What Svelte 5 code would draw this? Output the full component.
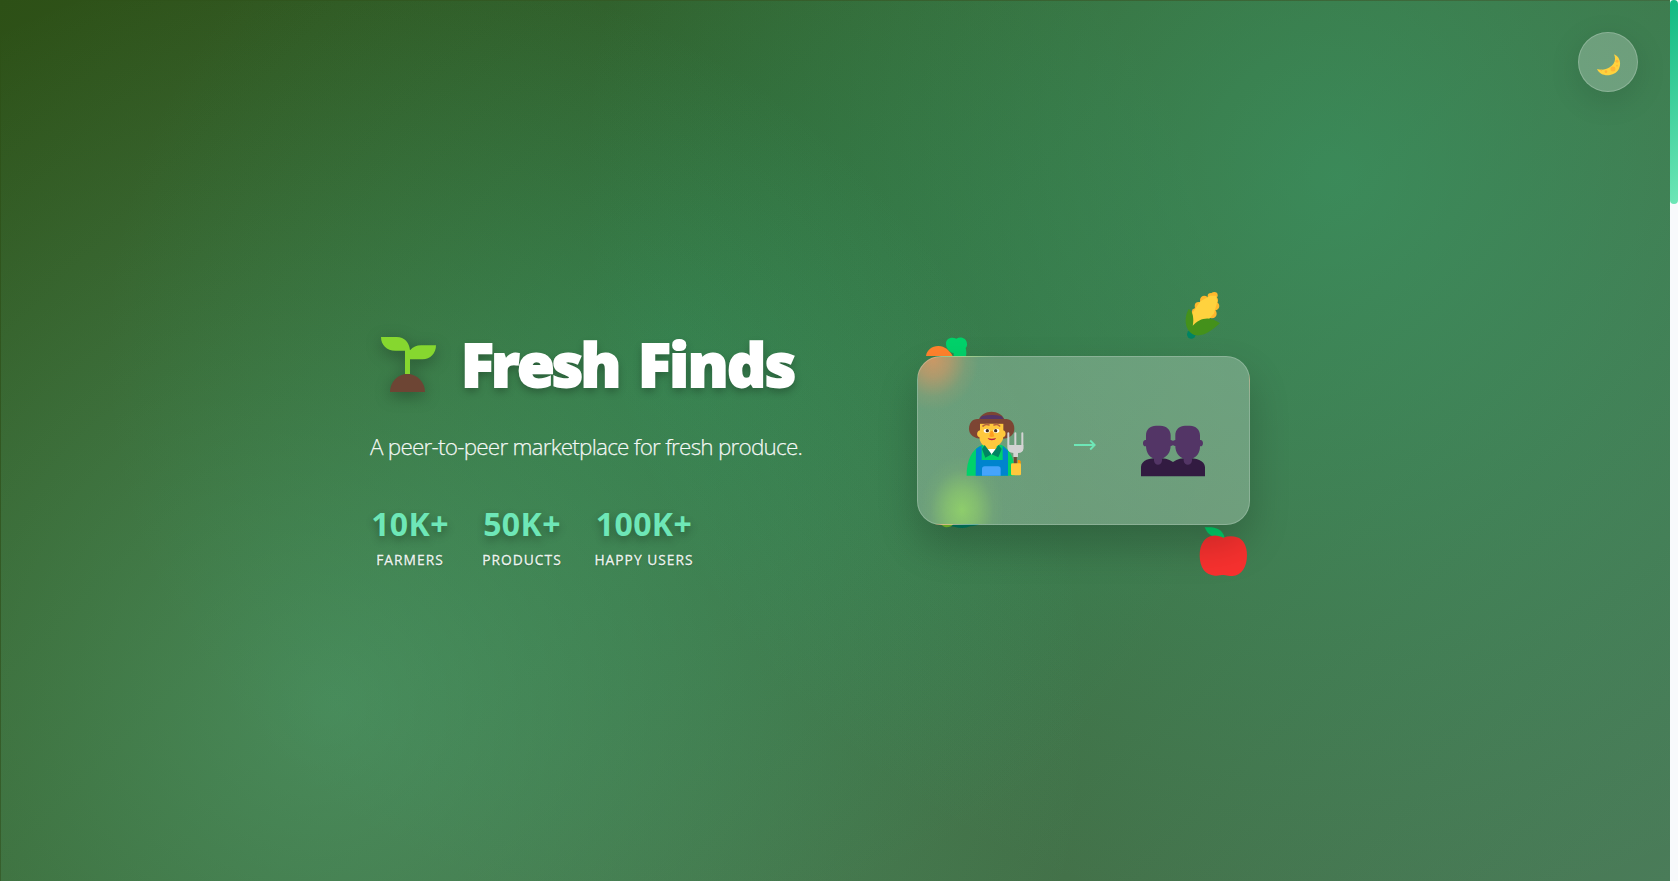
<script>
  const stats = [
    { value: '10K+', label: 'Farmers', w: 80 },
    { value: '50K+', label: 'Products', w: 80 },
    { value: '100K+', label: 'Happy Users', w: 100 }
  ];
</script>

<div class="page">
  <main class="hero">
    <section class="copy">
      <div class="brand">
        <svg class="sprout" viewBox="0 0 240 240" aria-hidden="true">
          <path d="M60 201c0-30 23-54 52-54s53 24 53 54z" fill="#6d4534" />
          <path d="M105 147V77H76C50 77 33 60 33 36h47c24 0 38 17 40 40 9-10 20-15 33-15h45c0 24-17 42-40 42h-38v44z" fill="#86d72f" />
        </svg>
        <h1><span class="first">Fresh</span> <span>Finds</span></h1>
      </div>
      <p class="tagline">A peer-to-peer marketplace for fresh produce.</p>
      <div class="stats">
        {#each stats as s}
          <div class="stat" style="width:{s.w}px">
            <span class="value">{s.value}</span>
            <span class="label">{s.label}</span>
          </div>
        {/each}
      </div>
    </section>

    <section class="visual">
      <svg class="float carrot" viewBox="77 173 126 57" aria-hidden="true">
        <path d="M77 230c2-19 20-31 38-30 18 1 32 12 42 30z" fill="#ff822d" />
        <path d="M160 230v-8c-13-4-24-16-23-30 0-14 16-21 31-14 14-8 31-1 32 15 1 5-1 10-4 13 2 8 3 16 1 24z" fill="#00d26a" />
      </svg>
      <svg class="float corn" viewBox="370 30 120 150" aria-hidden="true">
        <circle cx="395" cy="163" r="13" fill="#008463" />
        <g fill="#ffb82e">
          <circle cx="417" cy="78" r="12" /><circle cx="410" cy="98" r="14" /><circle cx="434" cy="60" r="13" />
          <circle cx="454" cy="49" r="10" /><circle cx="464" cy="46" r="10" /><circle cx="466" cy="78" r="13" />
          <circle cx="457" cy="101" r="14" /><circle cx="464" cy="61" r="11" />
        </g>
        <path d="M398 138v-38l24-36 30-17 17 0 4 18-10 35-22 26z" fill="#ffd23e" />
        <path d="M387 87c12 5 17 29 12 51 21-25 52-31 82-8-27 23-47 38-70 36-27-3-45-40-24-79z" fill="#44911b" />
      </svg>
      <svg class="float greens" viewBox="120 733 120 12" aria-hidden="true">
        <path d="M147 733h90q-8 6-26 7-22 9-48 1l-12-2z" fill="#007c60" />
        <path d="M122 733h38c-5 8-17 11-25 9-5-1-9-5-13-9z" fill="#7bc42d" />
      </svg>
      <svg class="float apple" viewBox="415 738 150 152" aria-hidden="true">
        <path d="M435 742c30-2 53 2 60 32-29 1-50-5-60-32z" fill="#00d26a" />
        <path d="M491 773c14-5 29-5 41-1 18 5 30 25 30 53 0 36-16 62-44 63-13 1-17-3-26-3s-14 3-26 2c-29-1-46-24-46-61 0-33 15-57 41-59 12-1 20 3 30 6z" fill="#f8312f" />
      </svg>

      <div class="card">
        <svg class="farmer" viewBox="0 0 240 255" aria-hidden="true">
          <path d="M35 227c-1-43 14-78 45-92h60c27 14 40 43 39 92z" fill="#00d26a" />
          <path d="M67 57h86c15 0 25 12 25 30 0 17-15 29-35 29H78c-20 0-36-12-36-29 0-18 10-30 25-30z" fill="#7d4533" />
          <path d="M75 71h70v20c9 1 9 20 0 20-1 13-10 22-20 28v10c-6 15-31 15-36 0v-10c-9-6-15-14-16-28-9 0-9-19 2-20z" fill="#ffc83d" />
          <path d="M71 61C80 27 138 26 149 61z" fill="#7d4533" />
          <path d="M66 57h88v12q-18 2-28 0-16-3-32 0-12 2-28-1z" fill="#7d4533" />
          <path d="M80 49q30-8 60 0l6 8H74z" fill="#533566" />
          <g fill="#fff"><ellipse cx="95" cy="92" rx="9" ry="6" /><ellipse cx="124" cy="92" rx="9" ry="6" /></g>
          <g fill="#432b21"><circle cx="97" cy="92" r="5" /><circle cx="122" cy="92" r="5" /></g>
          <path d="M84 78q9-7 18-3M117 75q10-4 17 3" fill="none" stroke="#b9653f" stroke-width="5" stroke-linecap="round" />
          <path d="M107 93h6l5 16q-8 4-15 0z" fill="#ff9c22" />
          <path d="M98 114q12 4 25 0c-2 8-21 10-25 0z" fill="#bb1d42" />
          <path d="M96 147h28l-14 17z" fill="#fff" />
          <path d="M89 135l21 28-19 10-10-26zM131 135l-21 28 20 9 10-25z" fill="#008463" />
          <path d="M63 147q8-7 17-10v43h63v-43l16 15v75H62z" fill="#0084ce" />
          <path d="M81 227v-20q0-8 8-8h40q8 0 8 8v20z" fill="#46a4fb" />
          <path d="M188 181c7-3 11 2 9 10h-9z" fill="#ff9400" />
          <path d="M181 165v35" stroke="#6d4534" stroke-width="9" />
          <path d="M160 100v42q0 10 10 10h24q8 0 8-8v-44M181 100v66" fill="none" stroke="#d3d3d3" stroke-width="6" stroke-linecap="round" />
          <path d="M159 135h46v11q0 12-16 13v12h-14v-12q-16-2-16-13z" fill="#d3d3d3" />
          <rect x="168" y="190" width="30" height="36" rx="4" fill="#ffc83d" />
        </svg>
        <svg class="arrow" viewBox="0 0 24 12" aria-hidden="true">
          <path d="M1 6h20M17.2 1.5L21.7 6l-4.5 4.5" fill="none" stroke="#6ee7b7" stroke-width="1.8" />
        </svg>
        <svg class="people" viewBox="240 430 200 160" aria-hidden="true">
          <path d="M243 587v-28c1-21 27-27 51-27 17 0 31 3 45 12 14-9 27-12 44-12 24 0 51 7 52 27v28z" fill="#321b41" />
          <path d="M258 478v-14c0-18 13-29 30-29h13c18 0 31 12 31 29v14q7 1 7 3 0-2 7-3v-14c0-18 13-29 29-29h15c17 0 30 12 30 29v14c12-2 12 21 0 19 0 18-8 31-24 37v6c-2 16-23 16-25 0v-6c-15-6-25-19-25-38q-5 0-7-3-2 3-7 3c-1 19-9 31-26 38v6c-2 16-22 16-24 0v-6c-16-6-23-19-24-37-12 2-12-21 0-19z" fill="#533566" />
        </svg>
      </div>
    </section>
  </main>

  <button class="theme" aria-label="Toggle theme">
    <svg viewBox="105 155 80 76" aria-hidden="true">
      <path d="M162 162c16 6 23 25 15 43-11 24-55 28-66 1 12 4 27 3 38-5 15-10 20-24 13-39z" fill="#ffd23e" />
      <g fill="#ffb636"><circle cx="159" cy="206" r="7.5" /><circle cx="171" cy="183" r="4.5" /><circle cx="138" cy="214" r="4" /><circle cx="171" cy="196" r="2.5" /><circle cx="124" cy="210" r="2.5" /></g>
    </svg>
  </button>
  <div class="track"><div class="thumb"></div></div>
</div>

<style>
  :global(body) { margin: 0; overflow: hidden; }
  .page {
    display: grid;
    grid-template-columns: 1670px 8px;
    width: 1678px;
    height: 881px;
    font-family: "Open Sans", "Noto Sans", sans-serif;
  }
  .hero {
    position: relative;
    box-sizing: border-box;
    display: flex;
    align-items: flex-start;
    height: 881px;
    padding: 325px 0 0 370px;
    background: linear-gradient(135deg, #2d5016 0%, #4a7c59 100%);
    overflow: hidden;
  }
  .hero::before {
    content: "";
    position: absolute;
    inset: 1px 0 0 1px;
    background:
      radial-gradient(circle at 20% 80%, rgba(110, 231, 183, 0.3) 0%, transparent 50%),
      radial-gradient(circle at 80% 20%, rgba(52, 211, 153, 0.3) 0%, transparent 50%),
      radial-gradient(circle at 40% 40%, rgba(16, 185, 129, 0.2) 0%, transparent 50%);
  }
  .copy { position: relative; width: 547px; }
  .brand { display: flex; height: 80px; align-items: center; gap: 11px; }
  .sprout { width: 80px; height: 80px; filter: drop-shadow(0 4px 8px rgba(0, 0, 0, 0.3)); }
  h1 {
    margin: -3px 0 0;
    font-size: 61px;
    line-height: 80px;
    font-weight: 800;
    letter-spacing: -1.5px;
    word-spacing: 5px;
    color: #fff;
    white-space: nowrap;
    -webkit-text-stroke: 1.8px #fff;
    text-shadow: 0 4px 8px rgba(0, 0, 0, 0.3);
  }
  .first { letter-spacing: -2.8px; }
  .tagline {
    margin: 24px 0 0;
    font-size: 22.5px;
    line-height: 36px;
    font-weight: 300;
    letter-spacing: -0.78px;
    color: rgba(255, 255, 255, 0.92);
    -webkit-text-stroke: 0.25px rgba(255, 255, 255, 0.9);
    white-space: nowrap;
  }
  .stats { display: flex; gap: 32px; margin-top: 37px; }
  .stat { display: flex; flex-direction: column; align-items: center; white-space: nowrap; }
  .value {
    font-size: 32px;
    line-height: 43px;
    font-weight: 700;
    letter-spacing: 0.4px;
    color: #6ee7b7;
    text-shadow: 0 4px 8px rgba(0, 0, 0, 0.3);
  }
  .label {
    margin-top: 2px;
    font-size: 13.8px;
    line-height: 26px;
    font-weight: 400;
    letter-spacing: 1px;
    text-transform: uppercase;
    color: rgba(255, 255, 255, 0.9);
    -webkit-text-stroke: 0.3px rgba(255, 255, 255, 0.9);
    text-shadow: 0 1px 2px rgba(0, 0, 0, 0.2);
  }
  .visual { position: relative; width: 333px; margin-top: 31px; }
  .card {
    position: relative;
    box-sizing: border-box;
    display: flex;
    align-items: flex-start;
    width: 333px;
    height: 169px;
    padding: 43px 0 0 37px;
    border: 1px solid rgba(255, 255, 255, 0.2);
    border-radius: 24px;
    background:
      radial-gradient(ellipse 46px 52px at 15px 2px, rgba(220, 151, 98, 0.85) 0%, rgba(214, 152, 102, 0.62) 35%, rgba(190, 157, 110, 0.2) 72%, transparent 100%),
      radial-gradient(ellipse 42px 54px at 44px 153px, rgba(146, 210, 106, 0.9) 0%, rgba(142, 202, 108, 0.66) 38%, rgba(130, 182, 115, 0.2) 75%, transparent 100%),
      rgba(255, 255, 255, 0.25);
    box-shadow: 0 20px 40px rgba(0, 0, 0, 0.2);
  }
  .farmer { width: 80px; height: 85px; }
  .arrow { width: 24px; height: 12px; margin: 39px 0 0 38px; }
  .people { width: 66.67px; height: 53.33px; margin: 23.5px 0 0 43px; }
  .float { position: absolute; }
  .carrot { width: 42px; height: 19px; left: 8.5px; top: -18.8px; }
  .corn { width: 40px; height: 50px; left: 266px; top: -66px; }
  .greens { width: 40px; height: 4px; left: 23px; top: 168.3px; }
  .apple { width: 50px; height: 50.67px; left: 281px; top: 169.7px; }
  .theme {
    position: absolute;
    left: 1578px;
    top: 32px;
    display: grid;
    place-items: center;
    box-sizing: border-box;
    width: 60px;
    height: 60px;
    padding: 6px 0 0;
    border: 1px solid rgba(255, 255, 255, 0.2);
    border-radius: 50%;
    background: rgba(255, 255, 255, 0.25);
    box-shadow: 0 8px 32px rgba(0, 0, 0, 0.12);
  }
  .theme svg { width: 26.67px; height: 25.33px; }
  .track { background: #f8fafc; }
  .thumb { height: 204px; border-radius: 4px; background: linear-gradient(135deg, #10b981, #6ee7b7); }
</style>
